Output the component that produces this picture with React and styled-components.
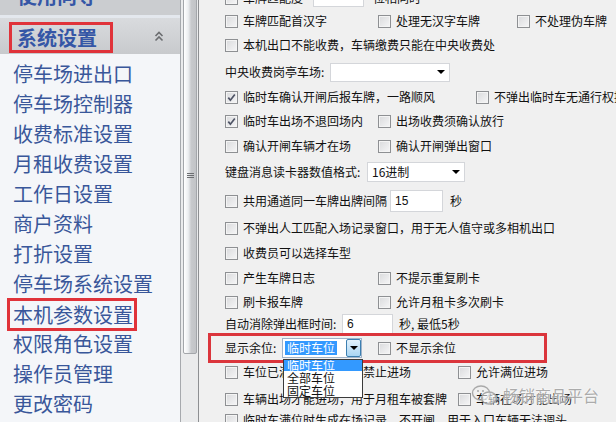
import React from "react"
import styled, { createGlobalStyle } from "styled-components"

const GlobalStyle = createGlobalStyle`
  html, body {
    margin: 0;
    padding: 0;
  }
  body {
    background: #f0f0f0;
    font-family: "Noto Sans CJK SC", "Noto Sans", sans-serif;
  }
`

const menu = [
  "停车场进出口",
  "停车场控制器",
  "收费标准设置",
  "月租收费设置",
  "工作日设置",
  "商户资料",
  "打折设置",
  "停车场系统设置",
  "本机参数设置",
  "权限角色设置",
  "操作员管理",
  "更改密码",
]

const Check = ({ checked }) => (
  <Box>
    {checked && (
      <svg width="9" height="9" viewBox="0 0 9 9">
        <path d="M1.3 4.6 L3.4 7.2 L7.8 1.4" fill="none" stroke="#4f5466" strokeWidth="1.7" />
      </svg>
    )}
  </Box>
)

const Chevrons = () => (
  <svg width="10" height="11" viewBox="0 0 10 11">
    <path d="M1.5 5 L5 1.5 L8.5 5 M1.5 9.5 L5 6 L8.5 9.5" fill="none" stroke="#6b6d70" strokeWidth="1.6" />
  </svg>
)

const WeChat = () => (
  <svg width="28" height="22" viewBox="0 0 28 22">
    <ellipse cx="10" cy="9" rx="8.5" ry="7" fill="none" stroke="#a6a6a6" strokeWidth="1.4" />
    <ellipse cx="18" cy="14" rx="7.5" ry="6" fill="rgba(255,255,255,0.6)" stroke="#a6a6a6" strokeWidth="1.4" />
    <circle cx="7" cy="7" r="1" fill="#a6a6a6" />
    <circle cx="12" cy="7" r="1" fill="#a6a6a6" />
  </svg>
)

const Opt = ({ w, checked, children }) => (
  <Cell $w={w}>
    <Check checked={checked} />
    <span>{children}</span>
  </Cell>
)

export default function App() {
  return (
    <Screen>
      <GlobalStyle />
      <Sidebar>
        <TopBand>
          <GroupTitle>使用向导</GroupTitle>
        </TopBand>
        <Divider />
        <GroupHeader>
          <GroupTitle $marked>系统设置</GroupTitle>
          <Chevrons />
        </GroupHeader>
        <MenuList>
          {menu.map((m) => (
            <MenuItem key={m}>
              <ItemLabel $marked={m === "本机参数设置"}>{m}</ItemLabel>
            </MenuItem>
          ))}
        </MenuList>
      </Sidebar>

      <ScrollTrack>
        <Thumb>
          <Grip />
        </Thumb>
      </ScrollTrack>

      <Panel>
        <Row $mt={-12}>
          <Opt w={88}>车牌匹配度</Opt>
          <TextBox $w={51} $h={18} />
          <Gap $w={9} />
          <span>位相同时</span>
        </Row>
        <Row $mt={3}>
          <Opt w={153}>车牌匹配首汉字</Opt>
          <Opt w={139}>处理无汉字车牌</Opt>
          <Opt>不处理伪车牌</Opt>
        </Row>
        <Row $mt={4}>
          <Opt>本机出口不能收费，车辆缴费只能在中央收费处</Opt>
        </Row>
        <Row $mt={7}>
          <Label $w={105}>中央收费岗亭车场:</Label>
          <Select $w={120} $h={19}>
            <span />
            <Arrow />
          </Select>
        </Row>
        <Row $mt={5}>
          <Opt w={251} checked>临时车确认开闸后报车牌，一路顺风</Opt>
          <Opt>不弹出临时车无通行权提示</Opt>
        </Row>
        <Row $mt={4}>
          <Opt w={153} checked>临时车出场不退回场内</Opt>
          <Opt>出场收费须确认放行</Opt>
        </Row>
        <Row $mt={5}>
          <Opt w={153}>确认开闸车辆才在场</Opt>
          <Opt>确认开闸弹出窗口</Opt>
        </Row>
        <Row $mt={6}>
          <Label $w={142}>键盘消息读卡器数值格式:</Label>
          <Select $w={98} $h={20}>
            <span>16进制</span>
            <Arrow />
          </Select>
        </Row>
        <Row $mt={9}>
          <Opt w={165}>共用通道同一车牌出牌间隔</Opt>
          <TextBox $w={53} $h={22}>15</TextBox>
          <Gap $w={7} />
          <span>秒</span>
        </Row>
        <Row $mt={7}>
          <Opt>不弹出人工匹配入场记录窗口，用于无人值守或多相机出口</Opt>
        </Row>
        <Row $mt={5}>
          <Opt>收费员可以选择车型</Opt>
        </Row>
        <Row $mt={5}>
          <Opt w={153}>产生车牌日志</Opt>
          <Opt>不提示重复刷卡</Opt>
        </Row>
        <Row $mt={4}>
          <Opt w={153}>刷卡报车牌</Opt>
          <Opt>允许月租卡多次刷卡</Opt>
        </Row>
        <Row $mt={2}>
          <Label $w={117}>自动消除弹出框时间:</Label>
          <TextBox $w={51} $h={20}>6</TextBox>
          <Gap $w={6} />
          <span>秒, 最低5秒</span>
        </Row>
        <Highlight>
          <Row>
            <Label $w={57}>显示余位:</Label>
            <Select $w={80} $h={20} $active>
              <Picked>临时车位</Picked>
              <DropButton>
                <Arrow />
              </DropButton>
              <DropList>
                <DropItem $selected>临时车位</DropItem>
                <DropItem>全部车位</DropItem>
                <DropItem>固定车位</DropItem>
              </DropList>
            </Select>
            <Gap $w={16} />
            <Opt>不显示余位</Opt>
          </Row>
        </Highlight>
        <Row $mt={-1}>
          <Opt w={233}>车位已满时，临时车辆禁止进场</Opt>
          <Opt>允许满位进场</Opt>
        </Row>
        <Row $mt={7}>
          <Opt w={233}>车辆出场才能进场，用于月租车被套牌</Opt>
          <Opt>车辆在场才能出场</Opt>
        </Row>
        <Row $mt={1}>
          <Opt>临时车满位时生成在场记录，不开闸，用于入口车辆无法调头</Opt>
        </Row>

        <Watermark>
          <WeChat />
          <span>畅销商品平台</span>
        </Watermark>
      </Panel>
    </Screen>
  )
}

const Screen = styled.div`
  display: flex;
  width: 616px;
  height: 422px;
  overflow: hidden;
`

const Sidebar = styled.aside`
  width: 180px;
  flex: none;
  display: flex;
  flex-direction: column;
  background: #f4f6f9;
  border-right: 1px solid #a6a9ad;
  overflow: hidden;
`

const TopBand = styled.div`
  height: 15px;
  flex: none;
  display: flex;
  align-items: flex-end;
  padding-left: 17px;
  background: #cbcdd0;
  overflow: hidden;
  & > span {
    margin-bottom: 9px;
  }
`

const Divider = styled.div`
  height: 3px;
  flex: none;
  background: #e4e8ee;
`

const GroupHeader = styled.div`
  height: 36px;
  flex: none;
  display: flex;
  align-items: center;
  justify-content: space-between;
  padding: 0 16px 0 9px;
  background: linear-gradient(#d9dbde, #c8cacd);
`

const GroupTitle = styled.span`
  box-sizing: border-box;
  font-size: 20px;
  font-weight: 700;
  line-height: 20px;
  color: #3556a6;
  white-space: nowrap;
  ${(p) =>
    p.$marked &&
    `
    height: 31px;
    line-height: 25px;
    margin-top: 3px;
    padding: 0 13px 0 5px;
    border: 3px solid #e0333a;
  `}
`

const MenuList = styled.nav`
  display: flex;
  flex-direction: column;
  padding-top: 5px;
`

const MenuItem = styled.div`
  height: 30px;
  flex: none;
  display: flex;
  align-items: center;
  padding-left: 13px;
`

const ItemLabel = styled.span`
  box-sizing: border-box;
  font-size: 20px;
  line-height: 30px;
  color: #39579a;
  white-space: nowrap;
  ${(p) =>
    p.$marked &&
    `
    height: 33px;
    line-height: 27px;
    margin-left: -6px;
    padding: 0 1px 0 3px;
    border: 3px solid #e0333a;
  `}
`

const ScrollTrack = styled.div`
  width: 17px;
  flex: none;
  display: flex;
  flex-direction: column;
  background: #eaebec;
  border-right: 1px solid #8d8f92;
`

const Thumb = styled.div`
  height: 362px;
  margin: -10px 1px 0 2px;
  display: flex;
  flex-direction: column;
  align-items: center;
  border: 1px solid #a3a6aa;
  border-radius: 2px;
  background: linear-gradient(90deg, #ffffff, #eceef0 35%, #c7c9cc 60%, #c2c4c7);
`

const Grip = styled.div`
  width: 7px;
  height: 5px;
  margin-top: 182px;
  background: repeating-linear-gradient(#6c6e71 0 1px, transparent 1px 2px);
`

const Panel = styled.main`
  flex: 1;
  position: relative;
  display: flex;
  flex-direction: column;
  padding-left: 26px;
  background: #f0f0f0;
  font-size: 12px;
  color: #111;
  overflow: hidden;
`

const Row = styled.div`
  height: 20px;
  flex: none;
  display: flex;
  align-items: center;
  margin-top: ${(p) => p.$mt || 0}px;
  white-space: nowrap;
  line-height: 14px;
`

const Cell = styled.div`
  display: flex;
  align-items: center;
  gap: 5px;
  flex: none;
  ${(p) => p.$w && `width: ${p.$w}px;`}
`

const Label = styled.span`
  flex: none;
  width: ${(p) => p.$w}px;
`

const Gap = styled.span`
  flex: none;
  width: ${(p) => p.$w}px;
`

const Box = styled.span`
  box-sizing: border-box;
  width: 13px;
  height: 13px;
  flex: none;
  display: flex;
  align-items: center;
  justify-content: center;
  border: 1px solid #8e9093;
  background: linear-gradient(135deg, #d9dadc, #f6f6f7);
  box-shadow: inset 0 0 0 1px #f4f4f4;
`

const TextBox = styled.span`
  box-sizing: border-box;
  flex: none;
  display: flex;
  align-items: center;
  width: ${(p) => p.$w}px;
  height: ${(p) => p.$h}px;
  padding-left: 4px;
  background: #fff;
  border: 1px solid #d4d6da;
  font-family: "Liberation Sans", "Noto Sans CJK SC", sans-serif;
`

const Select = styled.span`
  box-sizing: border-box;
  position: relative;
  flex: none;
  display: flex;
  align-items: center;
  justify-content: space-between;
  width: ${(p) => p.$w}px;
  height: ${(p) => p.$h}px;
  padding: 0 ${(p) => (p.$active ? 0 : 4)}px 0 4px;
  background: #fff;
  border: 1px solid ${(p) => (p.$active ? "#9fb3c9" : "#d4d6da")};
`

const Arrow = styled.span`
  width: 0;
  height: 0;
  border-left: 4px solid transparent;
  border-right: 4px solid transparent;
  border-top: 4px solid #000;
`

const Picked = styled.span`
  margin-left: -2px;
  padding: 0 2px;
  background: #3399ff;
  color: #fff;
  line-height: 14px;
`

const DropButton = styled.span`
  box-sizing: border-box;
  width: 15px;
  height: 18px;
  display: flex;
  align-items: center;
  justify-content: center;
  border: 1px solid #3c7fb1;
  border-radius: 2px;
  background: linear-gradient(#e3f2fc, #a9d5f3);
`

const DropList = styled.div`
  position: absolute;
  top: 20px;
  left: 0;
  width: 80px;
  box-sizing: border-box;
  display: flex;
  flex-direction: column;
  background: #fff;
  border: 1px solid #3b3b3b;
  z-index: 2;
`

const DropItem = styled.div`
  height: 12px;
  line-height: 12px;
  padding-left: 3px;
  overflow: hidden;
  ${(p) => p.$selected && "background: #3399ff; color: #fff; height: 11px; line-height: 9px;"}
  & + & {
    margin-top: 1px;
  }
`

const Highlight = styled.div`
  box-sizing: border-box;
  flex: none;
  width: 339px;
  height: 30px;
  margin: -1px 0 0 -17px;
  padding: 2px 0 2px 14px;
  border: 3px solid #db353c;
`

const Watermark = styled.div`
  position: absolute;
  left: 272px;
  top: 383px;
  display: flex;
  align-items: center;
  gap: 4px;
  font-size: 16px;
  color: #a8a8a8;
  text-shadow: 0 0 2px #fff, 0 0 2px #fff;
  opacity: 0.95;
`
